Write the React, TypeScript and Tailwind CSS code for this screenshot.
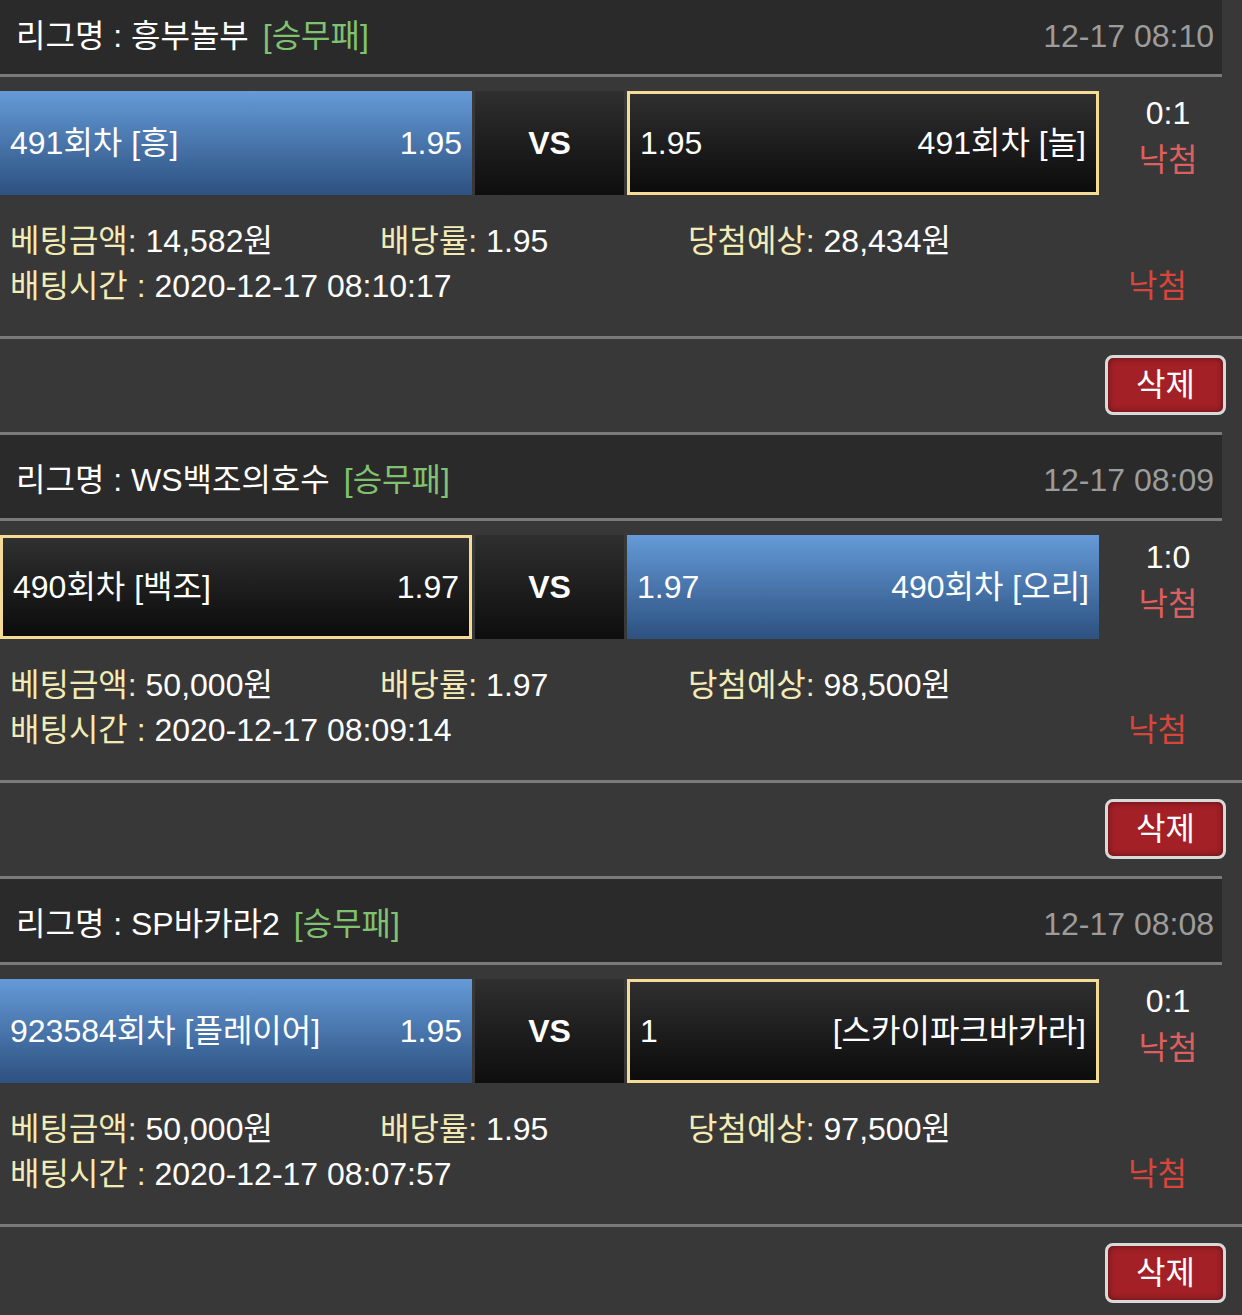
import React from 'react'

type Side = {
  name: string
  odds: string
  picked: boolean
}

type Bet = {
  league: string
  time: string
  home: Side
  away: Side
  score: string
  amount: string
  rate: string
  win: string
  betTime: string
}

const bets: Bet[] = [
  {
    league: '흥부놀부',
    time: '12-17 08:10',
    home: { name: '491회차 [흥]', odds: '1.95', picked: true },
    away: { name: '491회차 [놀]', odds: '1.95', picked: false },
    score: '0:1',
    amount: '14,582원',
    rate: '1.95',
    win: '28,434원',
    betTime: '2020-12-17 08:10:17',
  },
  {
    league: 'WS백조의호수',
    time: '12-17 08:09',
    home: { name: '490회차 [백조]', odds: '1.97', picked: false },
    away: { name: '490회차 [오리]', odds: '1.97', picked: true },
    score: '1:0',
    amount: '50,000원',
    rate: '1.97',
    win: '98,500원',
    betTime: '2020-12-17 08:09:14',
  },
  {
    league: 'SP바카라2',
    time: '12-17 08:08',
    home: { name: '923584회차 [플레이어]', odds: '1.95', picked: true },
    away: { name: '[스카이파크바카라]', odds: '1', picked: false },
    score: '0:1',
    amount: '50,000원',
    rate: '1.95',
    win: '97,500원',
    betTime: '2020-12-17 08:07:57',
  },
]

const TeamBox = ({ side, reverse }: { side: Side; reverse?: boolean }) => {
  const look = side.picked
    ? 'bg-gradient-to-b from-[#659bd8] to-[#2d5180] px-[10px]'
    : 'bg-gradient-to-b from-[#303030] to-[#0c0c0c] border-[3px] border-[#f4db96] px-[10px]'
  return (
    <div className={`w-[472px] h-full flex items-center justify-between text-white ${look}`}>
      {reverse ? (
        <>
          <span>{side.odds}</span>
          <span>{side.name}</span>
        </>
      ) : (
        <>
          <span>{side.name}</span>
          <span>{side.odds}</span>
        </>
      )}
    </div>
  )
}

const BetCard = ({ bet }: { bet: Bet }) => {
  return (
    <div>
      <div className="w-[1222px] h-[89px] bg-[#2a2a2a] border-y-[3px] border-[#7a7a7a] flex items-center justify-between pl-[16px] pr-[8px] pt-[6px]">
        <div className="flex items-center gap-[14px]">
          <span className="text-white">리그명 : {bet.league}</span>
          <span className="text-[#80c270]">[승무패]</span>
        </div>
        <span className="text-[#9c9c9c]">{bet.time}</span>
      </div>

      <div className="mt-[14px] h-[104px] flex gap-[3px]">
        <TeamBox side={bet.home} />
        <div className="w-[149px] h-full bg-gradient-to-b from-[#2f2f2f] to-[#0e0e0e] flex items-center justify-center text-white font-bold">
          VS
        </div>
        <TeamBox side={bet.away} reverse />
        <div className="w-[132px] flex flex-col items-center leading-[45px]">
          <span className="text-white">{bet.score}</span>
          <span className="text-[#df5e5e] mt-[2px]">낙첨</span>
        </div>
      </div>

      <div className="pt-[24px] pb-[27px] pl-[10px] pr-[55px] leading-[45px]">
        <div className="flex">
          <div className="w-[370px]">
            <span className="text-[#f3ebb6]">베팅금액:</span> <span className="text-white">{bet.amount}</span>
          </div>
          <div className="w-[308px]">
            <span className="text-[#f3ebb6]">배당률:</span> <span className="text-white">{bet.rate}</span>
          </div>
          <div>
            <span className="text-[#f3ebb6]">당첨예상:</span> <span className="text-white">{bet.win}</span>
          </div>
        </div>
        <div className="flex justify-between">
          <div>
            <span className="text-[#f3ebb6]">배팅시간 :</span> <span className="text-white">{bet.betTime}</span>
          </div>
          <span className="text-[#d8453a]">낙첨</span>
        </div>
      </div>

      <div className="h-[3px] bg-[#7a7a7a]" />

      <div className="pt-[16px] pb-[17px] pr-[16px] flex justify-end">
        <button className="w-[121px] h-[60px] rounded-[8px] border-[3px] border-[#d9d9d9] bg-[#a22026] shadow-[inset_0_0_6px_rgba(0,0,0,0.45)] text-white flex items-center justify-center">
          삭제
        </button>
      </div>
    </div>
  )
}

export default function App() {
  return (
    <div className="min-h-screen bg-[#383838] overflow-hidden font-['Liberation_Sans','Noto_Sans_CJK_KR',sans-serif] text-[32px]">
      <div className="mt-[-12px]">
        {bets.map((bet) => (
          <BetCard key={bet.time} bet={bet} />
        ))}
      </div>
    </div>
  )
}
